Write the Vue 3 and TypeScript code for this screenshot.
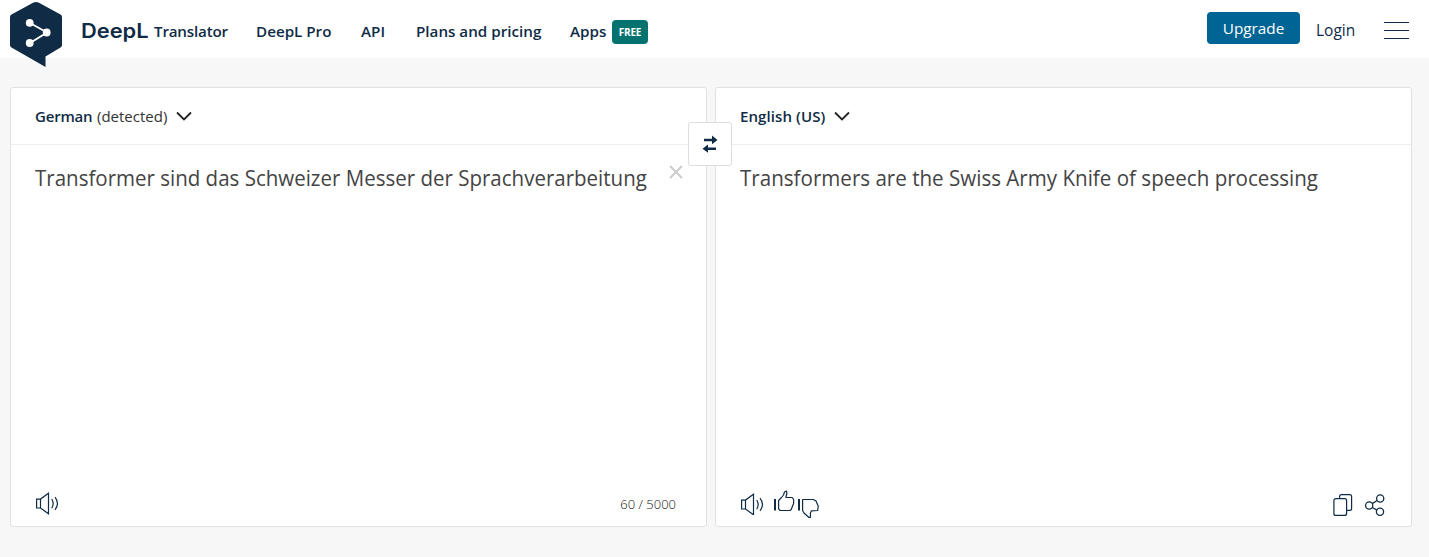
<script setup lang="ts">
interface NavItem {
  label: string
  cls: string
  badge?: string
}

const navItems: NavItem[] = [
  { label: 'Translator', cls: 'nav-translator' },
  { label: 'DeepL Pro', cls: 'nav-pro' },
  { label: 'API', cls: 'nav-api' },
  { label: 'Plans and pricing', cls: 'nav-plans' },
  { label: 'Apps', cls: 'nav-apps', badge: 'FREE' },
]

const sourceText = 'Transformer sind das Schweizer Messer der Sprachverarbeitung'
const targetText = 'Transformers are the Swiss Army Knife of speech processing'
const count = sourceText.length
const limit = 5000
</script>

<template>
  <div class="page">
    <header class="header">
      <svg class="logo" width="54" height="68" viewBox="0 0 54 68">
        <path d="M1 17.2Q1 15.5 2.5 14.6L24.5 2.6Q27 1.4 29.5 2.6L51.500 14.600Q53 15.500 53 17.200V45Q53 46.700 51.500 47.600L36.500 56.500V67L2.500 47.600Q1 46.700 1 45Z" fill="#0f2b46" />
        <path d="M21 23L38 32.500L21 43" fill="none" stroke="#fff" stroke-width="1.900" />
        <circle cx="20.700" cy="22.800" r="3.900" fill="#fff" />
        <circle cx="37.700" cy="32.500" r="3.900" fill="#fff" />
        <circle cx="20.700" cy="43" r="3.900" fill="#fff" />
      </svg>
      <span class="brand"><span class="brand-text">DeepL</span></span>
      <nav class="nav">
        <a v-for="item in navItems" :key="item.label" class="nav-item" :class="item.cls">
          <span>{{ item.label }}</span>
          <span v-if="item.badge" class="badge">{{ item.badge }}</span>
        </a>
      </nav>
      <div class="account">
        <button class="upgrade">Upgrade</button>
        <a class="login">Login</a>
        <div class="menu"><i /><i /><i /></div>
      </div>
    </header>

    <main class="panels">
      <section class="panel">
        <div class="lang">
          <span class="lang-name german">German</span>
          <span class="detected">(detected)</span>
          <svg class="chevron" width="16" height="10" viewBox="0 0 16 10"><path d="M1 1.500L8 8.500L15 1.500" fill="none" stroke="#222" stroke-width="1.800" /></svg>
        </div>
        <div class="body">
          <p class="text"><span class="source">{{ sourceText }}</span></p>
          <svg class="clear" width="14" height="14" viewBox="0 0 14 14"><path d="M1 1L13 13M13 1L1 13" stroke="#ccc" stroke-width="2" /></svg>
        </div>
        <div class="tools">
          <svg width="24" height="24" viewBox="0 0 24 24" fill="none" stroke="#0f2b46" stroke-width="1.200">
            <path d="M1.600 8.100H5.500L13.500 2.200V22.800L5.500 17H1.600ZM5.500 8.100V17" />
            <path d="M16.700 8Q19.700 12.500 16.700 17.200M20 6.200Q25 12.500 20 18.800" />
          </svg>
          <span class="counter">{{ count }} / {{ limit }}</span>
        </div>
      </section>

      <section class="panel">
        <div class="lang">
          <span class="lang-name english">English (US)</span>
          <svg class="chevron" width="16" height="10" viewBox="0 0 16 10"><path d="M1 1.500L8 8.500L15 1.500" fill="none" stroke="#222" stroke-width="1.800" /></svg>
        </div>
        <div class="body">
          <p class="text"><span class="target">{{ targetText }}</span></p>
        </div>
        <div class="tools">
          <svg width="24" height="24" viewBox="0 0 24 24" fill="none" stroke="#0f2b46" stroke-width="1.200">
            <path d="M1.600 9.100H5.500L13.500 3.200V23.800L5.500 18H1.600ZM5.500 9.100V18" />
            <path d="M16.700 9Q19.700 13.500 16.700 18.200M20 7.200Q25 13.500 20 19.800" />
          </svg>
          <svg class="thumbs" width="48" height="30" viewBox="0 0 48 30" fill="none" stroke="#0f2b46" stroke-width="1.200" stroke-linejoin="round">
            <path d="M2 11V22.500M26 11V22.500" stroke-width="2" />
            <path d="M5.600 12.500L8.500 9.500L10.500 7L11.500 4L13.300 3L13.900 5L12.900 9.500H19.200L20.600 11.500V15.500L18.200 21.500L17 22.500H7.200L5.600 20.900Z" />
            <path d="M29.600 11.500H40.500L43 13L45.200 18L44.700 22.500L38.500 22.800L37.400 25V29.300H35.700L31 25L29.600 22.500Z" />
          </svg>
          <div class="actions">
            <svg width="20" height="24" viewBox="0 0 20 24" fill="none" stroke="#0f2b46" stroke-width="1.200">
              <path d="M6.600 5V3.600Q6.600 1.700 8.500 1.700H16.700Q18.600 1.700 18.600 3.600V15.500Q18.600 17.400 16.700 17.400H13.700" />
              <rect x=".9" y="5.700" width="12.700" height="16.700" rx="2" />
            </svg>
            <svg width="22" height="24" viewBox="0 0 22 24" fill="none" stroke="#0f2b46" stroke-width="1.300">
              <circle cx="5.200" cy="12.500" r="3.600" />
              <circle cx="16.200" cy="5.500" r="3.600" />
              <circle cx="16" cy="18.800" r="3.600" />
              <path d="M8.200 10.600L13.100 7.500M8.200 14.500L13 17.100" />
            </svg>
          </div>
        </div>
      </section>

      <button class="swap" aria-label="Swap languages">
        <svg width="16" height="18" viewBox="0 0 16 18" fill="#0f2b46">
          <path d="M2 3.700H10V.5L15.500 5L10 9.300V6.300H2ZM14 15H6V17.700L.5 13.700L6 9.400V12.500H14Z" />
        </svg>
      </button>
    </main>
  </div>
</template>

<style>
body {
  background: #f7f7f7;
}
</style>

<style scoped>
* {
  box-sizing: border-box;
}
.page {
  height: 557px;
  overflow: hidden;
  background: #f7f7f7;
  font-family: 'Open Sans', 'Noto Sans', sans-serif;
  color: #0f2b46;
  white-space: nowrap;
}
.header {
  display: flex;
  height: 58px;
  padding-left: 9px;
  background: #fff;
}
.logo {
  flex: none;
}
.brand {
  width: 73px;
  margin-left: 18px;
  font: 600 19.5px/62px Inter, sans-serif;
}
.brand-text {
  display: inline-block;
  transform: scaleX(1.12);
  transform-origin: left;
}
.nav {
  display: flex;
  font-size: 15.2px;
  font-weight: 550;
  line-height: 63px;
}
.nav-item {
  display: flex;
  align-items: center;
  height: 63px;
}
.nav-translator { width: 102px; letter-spacing: -0.2px; }
.nav-pro { width: 105px; }
.nav-api { width: 55px; }
.nav-plans { width: 154px; }
.nav-apps > span:first-child { width: 36px; }
.badge {
  width: 36px;
  height: 24px;
  margin-left: 6px;
  border-radius: 4px;
  background: #04736f;
  color: #fff;
  font-size: 10px;
  font-weight: 700;
  letter-spacing: -0.2px;
  line-height: 25px;
  text-align: center;
}
.account {
  display: flex;
  margin-left: auto;
  padding: 12px 20px 0 0;
}
.upgrade {
  width: 93px;
  height: 32px;
  padding: 0;
  border: 0;
  border-radius: 4px;
  background: #006494;
  color: #fff;
  font: 500 15.3px/32px 'Open Sans', sans-serif;
}
.login {
  width: 68px;
  margin-left: 16px;
  font-size: 15.5px;
  line-height: 36px;
}
.menu {
  display: flex;
  flex-direction: column;
  gap: 7px;
  width: 25px;
  padding-top: 10px;
}
.menu i {
  height: 1px;
  background: #0f2b46;
}
.panels {
  position: relative;
  display: grid;
  grid-template-columns: 697px 697px;
  gap: 8px;
  padding: 29px 0 0 10px;
}
.panel {
  display: flex;
  flex-direction: column;
  height: 440px;
  border: 1px solid #e1e1e1;
  border-radius: 3px;
  background: #fff;
}
.lang {
  display: flex;
  align-items: center;
  height: 57px;
  padding-left: 24px;
  border-bottom: 1px solid #eee;
  font-size: 15px;
}
.lang-name {
  font-weight: 600;
}
.german { width: 62px; letter-spacing: -0.2px; }
.detected { width: 79px; color: #333; }
.english { width: 94px; letter-spacing: 0.1px; }
.body {
  display: flex;
  flex: 1;
  align-items: flex-start;
  padding: 15px 23px 0 24px;
}
.text {
  flex: 1;
  min-width: 0;
  margin: 0;
  color: #444;
  font-size: 22px;
  line-height: 34px;
}
.text span {
  display: inline-block;
  transform-origin: left;
}
.source { transform: scaleX(0.932); }
.target { transform: scaleX(0.935); }
.clear {
  flex: none;
  margin-top: 5px;
}
.tools {
  display: flex;
  align-items: center;
  height: 44px;
  padding: 0 24px 2px;
}
.counter {
  margin: 2px 6px 0 auto;
  color: #111;
  font-size: 13px;
  font-weight: 300;
}
.thumbs {
  margin-left: 9px;
}
.actions {
  display: flex;
  gap: 11px;
  margin: 4px 1px 0 auto;
}
.swap {
  position: absolute;
  top: 64px;
  left: 688px;
  display: flex;
  align-items: center;
  justify-content: center;
  width: 44px;
  height: 44px;
  padding: 0;
  border: 1px solid #ddd;
  border-radius: 3px;
  background: #fff;
}
</style>
